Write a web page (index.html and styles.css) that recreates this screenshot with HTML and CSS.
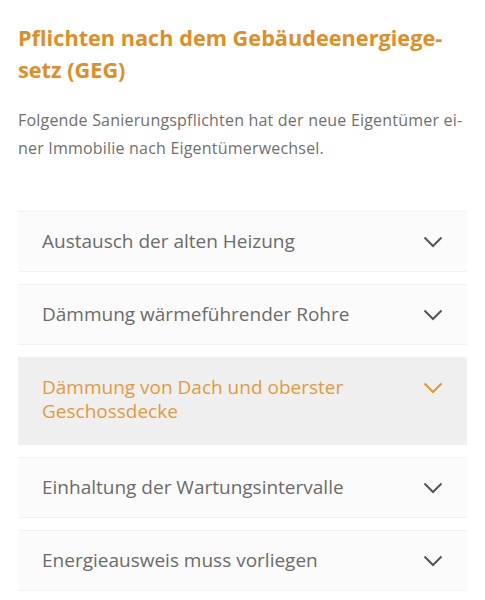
FILE: index.html
```html
<!DOCTYPE html>
<html lang="de">
<head>
  <meta charset="UTF-8">
  <meta name="viewport" content="width=device-width, initial-scale=1.0">
  <title>Pflichten nach dem GEG</title>
  <link rel="stylesheet" href="styles.css">
</head>
<body>
  <h1>Pflichten nach dem Gebäudeenergiege&shy;setz (GEG)</h1>
  <p class="intro">Folgende Sanierungspflichten hat der neue Eigentümer ei&shy;ner Immobilie nach Eigentümerwechsel.</p>

  <div class="accordion">
    <div class="item">
      <span class="item-title">Austausch der alten Heizung</span>
      <svg class="chevron" viewBox="0 0 20 12"><path d="M1.5 1.5 L10 10 L18.5 1.5"/></svg>
    </div>
    <div class="item">
      <span class="item-title">Dämmung wärmeführender Rohre</span>
      <svg class="chevron" viewBox="0 0 20 12"><path d="M1.5 1.5 L10 10 L18.5 1.5"/></svg>
    </div>
    <div class="item active">
      <span class="item-title">Dämmung von Dach und oberster Geschossdecke</span>
      <svg class="chevron" viewBox="0 0 20 12"><path d="M1.5 1.5 L10 10 L18.5 1.5"/></svg>
    </div>
    <div class="item">
      <span class="item-title">Einhaltung der Wartungsintervalle</span>
      <svg class="chevron" viewBox="0 0 20 12"><path d="M1.5 1.5 L10 10 L18.5 1.5"/></svg>
    </div>
    <div class="item">
      <span class="item-title">Energieausweis muss vorliegen</span>
      <svg class="chevron" viewBox="0 0 20 12"><path d="M1.5 1.5 L10 10 L18.5 1.5"/></svg>
    </div>
  </div>
</body>
</html>
```

FILE: styles.css
```css
body {
  font-family: "Open Sans", Arial, sans-serif;
  background-color: #fff;
  color: #666;
  margin: 0;
  padding: 22px 18px;
}
h1 {
  margin: 0;
  font-size: 21.7px;
  line-height: 32px;
  font-weight: bold;
  color: #e08e26;
  hyphens: manual;
}
.intro {
  margin: 20px 0 0;
  font-size: 16px;
  letter-spacing: 0.2px;
  line-height: 28px;
  color: #707070;
}
.accordion {
  margin-top: 49px;
}
.item {
  display: flex;
  align-items: flex-start;
  margin-bottom: 12px;
  padding: 17px 24px 18px;
  background-color: #fbfbfb;
  border-top: 1px solid #f2f2f2;
  border-bottom: 1px solid #f2f2f2;
  font-size: 19px;
  line-height: 24px;
  color: #6b6b6b;
}
.item-title {
  flex: 1;
  padding-right: 40px;
}
.chevron {
  width: 20px;
  height: 12px;
  margin-top: 7px;
  fill: none;
  stroke: #555;
  stroke-width: 2;
}
.item.active {
  padding-bottom: 21px;
  background-color: #efefef;
  border-color: #efefef;
  color: #e39a3c;
}
.item.active .chevron {
  stroke: #e4962e;
}
```
